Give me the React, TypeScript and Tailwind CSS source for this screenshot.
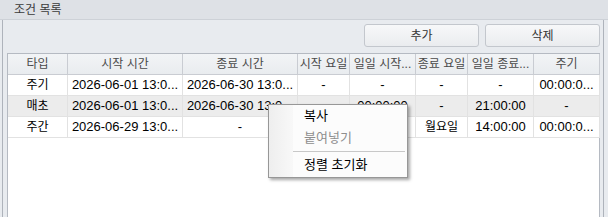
const font = { fontFamily: '"Liberation Sans", "Noto Sans CJK KR", sans-serif' };

const cols = [
  "w-[60px]",
  "w-[115px]",
  "w-[115px]",
  "w-[52px]",
  "w-[66px]",
  "w-[52px]",
  "w-[66px]",
  "w-[66px]",
];

const headers = ["타입", "시작 시간", "종료 시간", "시작 요일", "일일 시작...", "종료 요일", "일일 종료...", "주기"];

// cells covered by the context menu are left blank
const rows = [
  ["주기", "2026-06-01 13:0...", "2026-06-30 13:0...", "-", "-", "-", "-", "00:00:0..."],
  ["매초", "2026-06-01 13:0...", "2026-06-30 13:0...", "", "00:00:00", "-", "21:00:00", "-"],
  ["주간", "2026-06-29 13:0...", "-", "", "", "월요일", "14:00:00", "00:00:0..."],
];

function Cell({ i, text, head }: { i: number; text: string; head?: boolean }) {
  const korean = /[가-힣]/.test(text);
  return (
    <div
      className={`${cols[i]} shrink-0 h-full flex items-center justify-center overflow-hidden whitespace-nowrap border-r ${
        head ? "border-[#c9ccd2] text-[#4a4a4a] text-[12px]" : "border-[#e2e2e2] text-black"
      } ${!head && korean ? "text-[12px]" : !head ? "text-[13px]" : ""}`}
    >
      {text}
    </div>
  );
}

export default function App() {
  return (
    <div className="relative w-[608px] h-[217px] overflow-hidden bg-[#e8ebef] flex flex-col" style={font}>
      <div className="h-[20px] shrink-0 bg-[#dee1e6] border-b border-[#cdd1d7] flex items-center pl-[14px] text-[12px] text-[#3a3a3a]">
        조건 목록
      </div>
      <div className="flex-1 ml-[2px] w-[602px] border-x border-[#aeb3bb] pl-[4px] pr-[3px] pt-[4px] flex flex-col">
        <div className="flex justify-end gap-[6px]">
          <button className="w-[115px] h-[23px] rounded-[3px] border border-[#c3c7cd] bg-gradient-to-b from-[#f7f8f9] to-[#eaecef] text-[12px] text-[#333]">
            추가
          </button>
          <button className="w-[115px] h-[23px] rounded-[3px] border border-[#c3c7cd] bg-gradient-to-b from-[#f7f8f9] to-[#eaecef] text-[12px] text-[#333]">
            삭제
          </button>
        </div>
        <div className="mt-[6px] flex-1 bg-white border-l border-t border-[#b5bac2] flex flex-col">
          <div className="h-[21px] flex bg-gradient-to-b from-[#f2f4f6] to-[#e9ecef] border-b border-[#c9ccd2]">
            {headers.map((h, i) => (
              <Cell key={i} i={i} text={h} head />
            ))}
          </div>
          {rows.map((r, ri) => (
            <div
              key={ri}
              className={`h-[21px] flex border-b border-[#e2e2e2] ${ri === 1 ? "bg-[#ececec]" : "bg-white"}`}
            >
              {r.map((c, i) => (
                <Cell key={i} i={i} text={c} />
              ))}
            </div>
          ))}
          <div className="flex-1 w-[592px] border-r border-[#b5bac2]" />
        </div>
      </div>

      <div className="absolute left-[268px] top-[104px] w-[140px] h-[74px] bg-[#fcfcfc] border border-[#979797] shadow-[2px_2px_3px_rgba(0,0,0,0.35)] flex">
        <div className="w-[24px] h-full bg-gradient-to-r from-[#eeeeee] to-[#f8f8f8]" />
        <div className="flex-1 flex flex-col text-[13px]">
          <div className="h-[22px] flex items-center pl-[11px] text-black">복사</div>
          <div className="h-[22px] flex items-center pl-[11px] text-[#8e8e8e]">붙여넣기</div>
          <div className="h-[5px] flex items-center pr-[2px]">
            <div className="w-full h-px bg-[#c8c8c8]" />
          </div>
          <div className="h-[22px] flex items-center pl-[11px] text-black">정렬 초기화</div>
        </div>
      </div>
    </div>
  );
}
